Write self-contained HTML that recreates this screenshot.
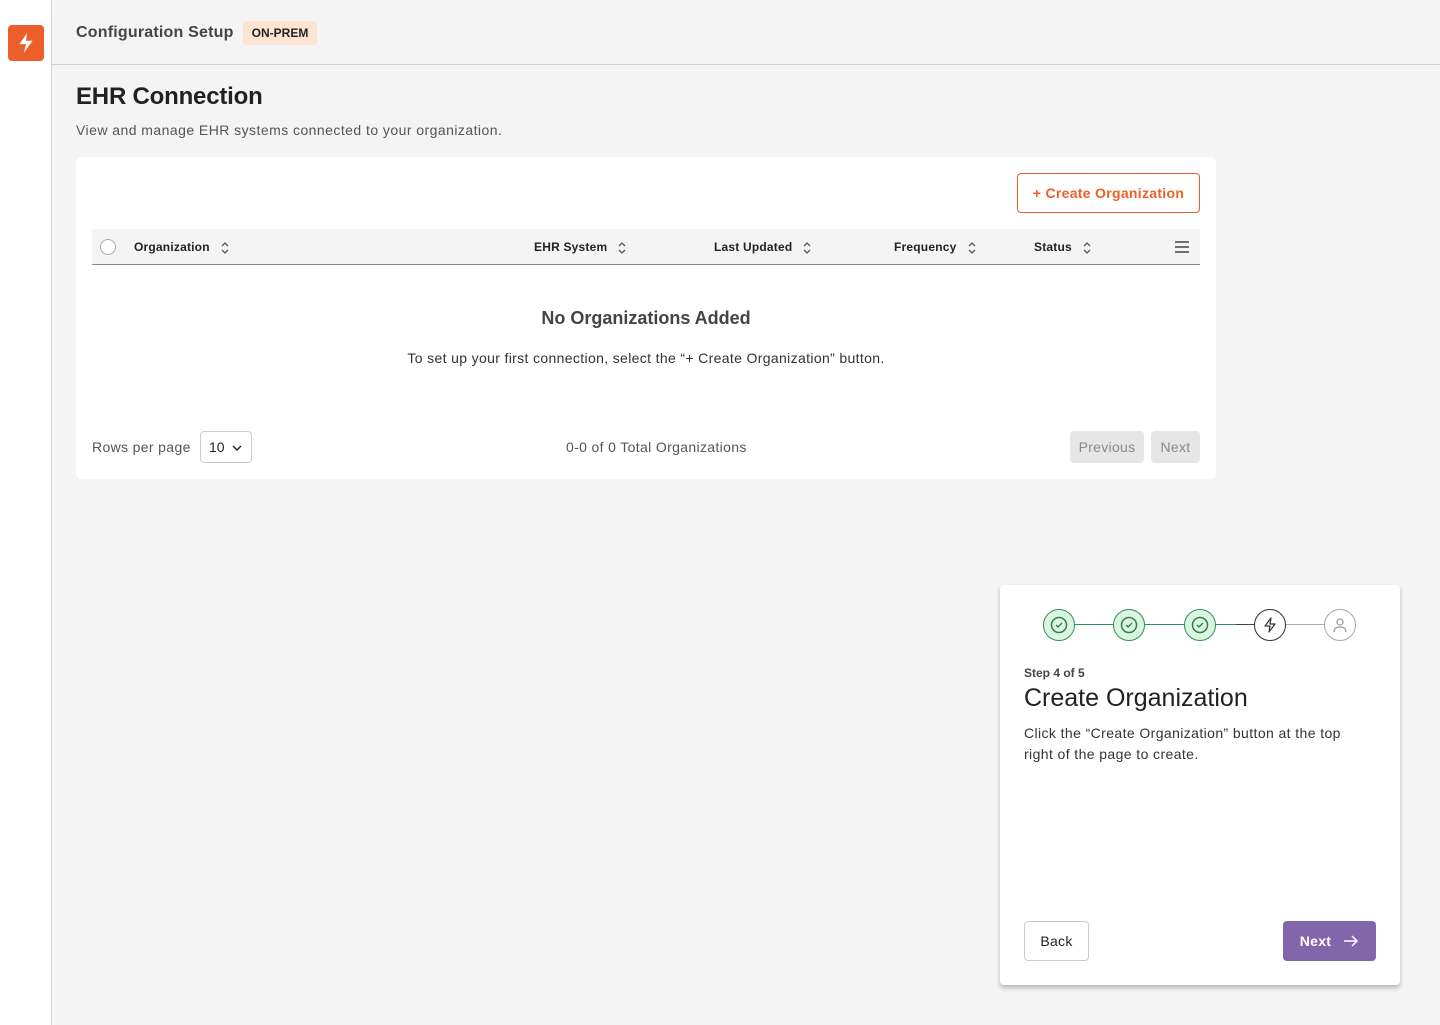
<!DOCTYPE html>
<html><head><meta charset="utf-8"><style>
*{box-sizing:border-box;margin:0;padding:0}
body{width:1440px;height:1025px;background:#f4f4f4;font-family:"Liberation Sans",sans-serif;color:#333;position:relative;overflow:hidden}
.side{position:absolute;left:0;top:0;width:52px;height:1025px;background:#fff;border-right:1px solid #d6d6d6}
.logo{position:absolute;left:8px;top:25px;width:36px;height:36px;background:#ec5f2a;border-radius:4px;display:flex;align-items:center;justify-content:center}
.hdr{position:absolute;left:52px;top:0;right:0;height:65px;border-bottom:1px solid #d0d0d0}
.abs{position:absolute}
.ls{letter-spacing:0.35px}
.sort{display:inline-block;vertical-align:middle;margin-left:10px}
.th{position:absolute;top:240px;font-size:12px;font-weight:bold;color:#222;letter-spacing:0.2px}
.btn{position:absolute;border-radius:4px;font-size:14px;display:flex;align-items:center;justify-content:center;letter-spacing:0.3px}
.c{position:absolute;top:609px;width:32px;height:32px;border-radius:50%;display:flex;align-items:center;justify-content:center}
.g{background:#dcf5df;border:1.5px solid #2f8f5b}
</style></head><body>
<div class="side"><div class="logo"><svg width="20" height="22" viewBox="0 0 18 20"><path d="M10 1 L3 11 H9 L7 19 L15 8 H9 Z" fill="#fff"/></svg></div></div>
<div class="hdr"></div>
<div class="abs" style="left:76px;top:24px;font-size:16px;font-weight:bold;color:#444;letter-spacing:0.2px">Configuration Setup</div>
<div class="abs" style="left:243px;top:21px;height:24px;width:74px;background:#fde4d3;border-radius:3px;font-size:12px;font-weight:bold;color:#222;display:flex;align-items:center;justify-content:center">ON-PREM</div>
<div class="abs" style="left:76px;top:83px;font-size:24px;font-weight:bold;color:#222;letter-spacing:-0.2px">EHR Connection</div>
<div class="abs ls" style="left:76px;top:122px;font-size:14px;color:#555;letter-spacing:0.45px">View and manage EHR systems connected to your organization.</div>
<div class="abs" style="left:76px;top:157px;width:1140px;height:322px;background:#fff;border-radius:6px"></div>
<div class="btn" style="left:1017px;top:173px;width:183px;height:40px;border:1px solid #ec5f2a;color:#ec5f2a;font-weight:bold;font-size:14px">+ Create Organization</div>
<div class="abs" style="left:92px;top:229px;width:1108px;height:36px;background:#f4f4f4;border-bottom:1px solid #888"></div>
<div class="abs" style="left:100px;top:239px;width:16px;height:16px;border:1px solid #aaa;border-radius:50%;background:#fff"></div>
<div class="th" style="left:134px">Organization<svg class="sort" width="10" height="14" viewBox="0 0 10 14"><path d="M2 5 L5 2 L8 5 M2 9 L5 12 L8 9" stroke="#555" fill="none" stroke-width="1.3"/></svg></div>
<div class="th" style="left:534px">EHR System<svg class="sort" width="10" height="14" viewBox="0 0 10 14"><path d="M2 5 L5 2 L8 5 M2 9 L5 12 L8 9" stroke="#555" fill="none" stroke-width="1.3"/></svg></div>
<div class="th" style="left:714px">Last Updated<svg class="sort" width="10" height="14" viewBox="0 0 10 14"><path d="M2 5 L5 2 L8 5 M2 9 L5 12 L8 9" stroke="#555" fill="none" stroke-width="1.3"/></svg></div>
<div class="th" style="left:894px">Frequency<svg class="sort" width="10" height="14" viewBox="0 0 10 14"><path d="M2 5 L5 2 L8 5 M2 9 L5 12 L8 9" stroke="#555" fill="none" stroke-width="1.3"/></svg></div>
<div class="th" style="left:1034px">Status<svg class="sort" width="10" height="14" viewBox="0 0 10 14"><path d="M2 5 L5 2 L8 5 M2 9 L5 12 L8 9" stroke="#555" fill="none" stroke-width="1.3"/></svg></div>
<svg class="abs" style="left:1174px;top:240px" width="16" height="14"><path d="M1 2H15M1 7H15M1 12H15" stroke="#444" stroke-width="1.5"/></svg>
<div class="abs" style="left:92px;width:1108px;top:308px;text-align:center;font-size:18px;font-weight:bold;color:#444">No Organizations Added</div>
<div class="abs ls" style="left:92px;width:1108px;top:350px;text-align:center;font-size:14px;color:#333">To set up your first connection, select the “+ Create Organization” button.</div>
<div class="abs ls" style="left:92px;top:439px;font-size:14px;color:#555">Rows per page</div>
<div class="abs" style="left:200px;top:431px;width:52px;height:32px;border:1px solid #ccc;border-radius:4px;font-size:14px;padding:7px 0 0 8px;color:#222">10 <svg width="10" height="8" style="margin-left:4px"><path d="M1 2L5 6L9 2" stroke="#222" fill="none" stroke-width="1.4"/></svg></div>
<div class="abs ls" style="left:566px;top:439px;font-size:14px;color:#555">0-0 of 0 Total Organizations</div>
<div class="btn" style="left:1070px;top:431px;width:74px;height:32px;background:#e6e6e6;color:#888">Previous</div>
<div class="btn" style="left:1151px;top:431px;width:49px;height:32px;background:#e6e6e6;color:#888">Next</div>

<div class="abs" style="left:1000px;top:585px;width:400px;height:400px;background:#fff;border-radius:4px;box-shadow:0 3px 5px rgba(0,0,0,.25)"></div>
<div class="abs" style="left:1060px;top:624px;width:176px;height:1px;background:#2f8f5b"></div>
<div class="abs" style="left:1236px;top:624px;width:34px;height:1px;background:#444"></div>
<div class="abs" style="left:1270px;top:624px;width:70px;height:1px;background:#aaa"></div>
<div class="c g" style="left:1043px"><svg width="18" height="18"><circle cx="9" cy="9" r="7.5" stroke="#2f7f50" fill="none" stroke-width="1.5"/><path d="M6 9L8 11L12 7" stroke="#2f7f50" fill="none" stroke-width="1.4"/></svg></div>
<div class="c g" style="left:1113px"><svg width="18" height="18"><circle cx="9" cy="9" r="7.5" stroke="#2f7f50" fill="none" stroke-width="1.5"/><path d="M6 9L8 11L12 7" stroke="#2f7f50" fill="none" stroke-width="1.4"/></svg></div>
<div class="c g" style="left:1184px"><svg width="18" height="18"><circle cx="9" cy="9" r="7.5" stroke="#2f7f50" fill="none" stroke-width="1.5"/><path d="M6 9L8 11L12 7" stroke="#2f7f50" fill="none" stroke-width="1.4"/></svg></div>
<div class="c" style="left:1254px;background:#fff;border:1.5px solid #333"><svg width="18" height="18"><path d="M10 2L4 10H9L8 16L14 8H9Z" stroke="#333" fill="none" stroke-width="1.2" stroke-linejoin="round"/></svg></div>
<div class="c" style="left:1324px;background:#fff;border:1.5px solid #aaa"><svg width="18" height="18"><circle cx="9" cy="6" r="3" stroke="#999" fill="none" stroke-width="1.2"/><path d="M3 16C3 12 6 11 9 11C12 11 15 12 15 16" stroke="#999" fill="none" stroke-width="1.2"/></svg></div>
<div class="abs" style="left:1024px;top:666px;font-size:12px;font-weight:bold;color:#444">Step 4 of 5</div>
<div class="abs" style="left:1024px;top:684px;font-size:25px;color:#222">Create Organization</div>
<div class="abs" style="left:1024px;top:723px;width:335px;font-size:14px;line-height:21px;color:#333;letter-spacing:0.4px">Click the “Create Organization” button at the top right of the page to create.</div>
<div class="btn" style="left:1024px;top:921px;width:65px;height:40px;border:1px solid #ccc;color:#222">Back</div>
<div class="btn" style="left:1283px;top:921px;width:93px;height:40px;background:#8265aa;color:#fff;font-weight:bold">Next<svg width="16" height="14" style="margin-left:12px"><path d="M1 7H14M9 2L14 7L9 12" stroke="#fff" fill="none" stroke-width="1.5"/></svg></div>
</body></html>
